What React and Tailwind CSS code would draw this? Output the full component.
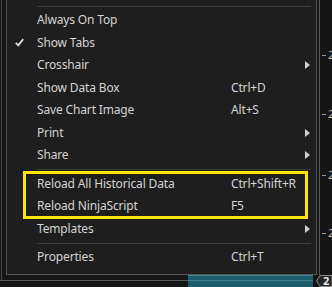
import React from 'react';

const items = [
  { label: 'Always On Top' },
  { label: 'Show Tabs', checked: true },
  { label: 'Crosshair', sub: true },
  { label: 'Show Data Box', key: 'Ctrl+D' },
  { label: 'Save Chart Image', key: 'Alt+S' },
  { label: 'Print', sub: true },
  { label: 'Share', sub: true },
  'sep',
  { label: 'Reload All Historical Data', key: 'Ctrl+Shift+R' },
  { label: 'Reload NinjaScript', key: 'F5' },
  { label: 'Templates', sub: true },
  'sep',
  { label: 'Properties', key: 'Ctrl+T' },
];

const Separator = () => (
  <div className="h-[6px] flex items-center">
    <div className="h-px w-full ml-[30px] mr-[5px] bg-[#3a3a3a]" />
  </div>
);

const MenuRow = ({ item }) => (
  <div className="h-[22.5px] flex items-center text-[#d4d4d4] tracking-[-0.15px]">
    <span className="w-[30px] pl-[8px] flex items-center">
      {item.checked && (
        <svg width="9" height="9" viewBox="0 0 9 9">
          <path d="M0.8 4.8 L3.3 7.4 L8.2 1.2" fill="none" stroke="#d8d8d8" strokeWidth="1.9" />
        </svg>
      )}
    </span>
    <span className="w-[194px] whitespace-nowrap">{item.label}</span>
    <span className="flex-1 whitespace-nowrap">{item.key}</span>
    <span className="w-[11px] pr-[6px] flex items-center">
      {item.sub && (
        <svg width="5" height="8" viewBox="0 0 5 8">
          <path d="M0 0 L5 4 L0 8 Z" fill="#cfcfcf" />
        </svg>
      )}
    </span>
  </div>
);

// price axis ticks, partially hidden behind the window edge
const ticks = [55, 114, 175, 233];

export default function App() {
  return (
    <div className="w-[332px] h-[287px] bg-[#161616] overflow-hidden flex flex-col font-['Noto_Sans','Open_Sans',sans-serif] text-[12px]">
      <div className="flex h-[275px]">
        <div className="w-[6px] pl-[1px]">
          <div className="h-full w-px bg-[#4a4a4a]" />
        </div>

        <div className="relative w-[311px] h-full bg-[#1e1e1e] border border-t-0 border-[#555555] flex flex-col">
          <div className="h-[9px] pt-[6px]">
            <div className="h-px ml-[30px] mr-[5px] bg-[#3a3a3a]" />
          </div>
          {items.map((item, i) =>
            item === 'sep' ? <Separator key={i} /> : <MenuRow key={i} item={item} />
          )}
          <div className="absolute left-[16px] top-[171px] w-[285px] h-[48px] border-[3px] border-[#ffe600]" />
        </div>

        <div className="relative flex-1 pl-[2px]">
          <div className="h-full border-l border-[#5a5a5a]" />
          {ticks.map((y) => (
            <div
              key={y}
              className="absolute left-[5px] flex items-center gap-[2px] text-[11px] text-[#bdbdbd]"
              style={{ top: y - 8 }}
            >
              <span className="w-[4px] h-px bg-[#9a9a9a]" />
              <span>2</span>
            </div>
          ))}
        </div>
      </div>

      <div className="flex h-[12px]">
        <div className="w-[188px] h-full flex flex-col">
          <div className="h-[5px] border-l border-[#4a4a4a] ml-[1px]" />
          <div className="h-px bg-[#5a5a5a]" />
        </div>
        <div className="w-[125px] h-full bg-[#1b5d6b] border-t border-[#3f8a9a] flex flex-col">
          <div className="h-[4px]" />
          <div className="h-px bg-[#3b7f8e]" />
        </div>
        <div className="relative flex-1 h-full">
          <svg className="absolute left-[3px] top-0" width="16" height="12" viewBox="0 0 16 12">
            <path d="M0.5 6 L4 0.5 L16 0.5 L16 11.5 L4 11.5 Z" fill="#262626" stroke="#8a8a8a" />
          </svg>
          <span className="absolute left-[10px] top-[-2px] text-[11px] font-bold text-[#e8e8e8]">2</span>
        </div>
      </div>
    </div>
  );
}
